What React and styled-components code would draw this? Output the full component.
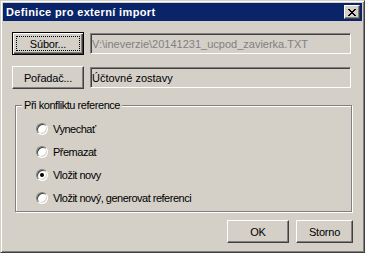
import styled, { createGlobalStyle } from "styled-components";

const GlobalStyle = createGlobalStyle`
  html,
  body {
    margin: 0;
    padding: 0;
    background: #d4d0c8;
  }

  body {
    font-family: "Liberation Sans", Arial, sans-serif;
    font-size: 11px;
    color: #000;
  }
`;

const Window = styled.div`
  width: 365px;
  height: 253px;
  box-sizing: border-box;
  display: flex;
  flex-direction: column;
  padding: 2px;
  background: #d4d0c8;
  border: 1px solid;
  border-color: #d4d0c8 #404040 #404040 #d4d0c8;
  box-shadow: inset 1px 1px #fff, inset -1px -1px #808080;
`;

const TitleBar = styled.div`
  height: 18px;
  flex: none;
  display: flex;
  align-items: center;
  padding: 0 2px 0 3px;
  background: #0a246a;
  color: #fff;
  font-weight: bold;
  font-size: 11px;
  letter-spacing: 0.35px;
`;

const CloseButton = styled.div`
  margin-left: auto;
  width: 16px;
  height: 14px;
  box-sizing: border-box;
  display: flex;
  align-items: center;
  justify-content: center;
  padding: 1px 1px 0 0;
  background: #d4d0c8;
  border: 1px solid;
  border-color: #fff #404040 #404040 #fff;
  box-shadow: inset -1px -1px #808080;

  svg {
    display: block;
  }
`;

const Body = styled.div`
  flex: 1;
  display: flex;
  flex-direction: column;
  padding: 11px 9px 0 9px;
`;

const Row = styled.div`
  display: flex;
  align-items: center;
  gap: 6px;
  height: 23px;
  margin-right: 2px;

  & + & {
    margin-top: 11px;
  }
`;

const Button = styled.div`
  position: relative;
  width: ${(p) => p.$w || 72}px;
  height: 23px;
  flex: none;
  box-sizing: border-box;
  display: flex;
  align-items: center;
  justify-content: center;
  letter-spacing: -0.2px;
  background: #d4d0c8;
  border: 1px solid;
  border-color: ${(p) =>
    p.$default ? "#000" : "#fff #404040 #404040 #fff"};
  box-shadow: ${(p) =>
    p.$default
      ? "inset 1px 1px #fff, inset -1px -1px #404040, inset -2px -2px #808080"
      : "inset -1px -1px #808080"};

  /* focus rectangle of the default button */
  &::after {
    content: "";
    display: ${(p) => (p.$default ? "block" : "none")};
    position: absolute;
    top: 3px;
    left: 3px;
    right: 3px;
    bottom: 3px;
    border: 1px dotted #000;
  }
`;

const Field = styled.div`
  flex: 1;
  height: 21px;
  box-sizing: border-box;
  display: flex;
  align-items: center;
  padding: 0 1px;
  white-space: nowrap;
  overflow: hidden;
  color: ${(p) => (p.$disabled ? "#808080" : "#000")};
  background: #d4d0c8;
  border: 1px solid;
  border-color: #808080 #fff #fff #808080;
  box-shadow: inset 1px 1px #404040, inset -1px -1px #d4d0c8;
`;

const GroupBox = styled.div`
  position: relative;
  height: 107px;
  box-sizing: border-box;
  margin: 16px 1px 0 3px;
  padding: 11px 0 2px 20px;
  border: 1px solid #808080;
  box-shadow: inset 1px 1px #fff, 1px 1px #fff;
`;

const Legend = styled.span`
  position: absolute;
  top: -7px;
  left: 6px;
  padding: 0 2px;
  line-height: 13px;
  letter-spacing: -0.45px;
  background: #d4d0c8;
`;

const Option = styled.div`
  display: flex;
  align-items: center;
  gap: 5px;
  height: 23px;
  letter-spacing: -0.5px;
`;

const Radio = styled.span`
  position: relative;
  width: 12px;
  height: 12px;
  flex: none;
  box-sizing: border-box;
  border-radius: 50%;
  background: #fff;
  border: 1px solid;
  border-color: #808080 #fff #fff #808080;
  box-shadow: inset 1px 1px #404040, inset -1px -1px #d4d0c8;

  &::after {
    content: "";
    display: ${(p) => (p.$checked ? "block" : "none")};
    position: absolute;
    top: 3px;
    left: 3px;
    width: 4px;
    height: 4px;
    border-radius: 50%;
    background: #000;
  }
`;

const Footer = styled.div`
  display: flex;
  justify-content: flex-end;
  gap: 7px;
  margin-top: 8px;
`;

const options = [
  { label: "Vynechať" },
  { label: "Přemazat" },
  { label: "Vložit novy", checked: true },
  { label: "Vložit nový, generovat referenci" },
];

const App = () => {
  return (
    <>
      <GlobalStyle />
      <Window>
        <TitleBar>
          Definice pro externí import
          <CloseButton>
            <svg width="8" height="7" viewBox="0 0 8 7" shapeRendering="crispEdges">
              <path
                fill="#000"
                d="M0 0h2v1H0zM6 0h2v1H6zM1 1h2v1H1zM5 1h2v1H5zM2 2h4v1H2zM3 3h2v1H3zM2 4h4v1H2zM1 5h2v1H1zM5 5h2v1H5zM0 6h2v1H0zM6 6h2v1H6z"
              />
            </svg>
          </CloseButton>
        </TitleBar>
        <Body>
          <Row>
            <Button $default>Súbor...</Button>
            <Field $disabled>V:\ineverzie\20141231_ucpod_zavierka.TXT</Field>
          </Row>
          <Row>
            <Button>Pořadač...</Button>
            <Field>Účtovné zostavy</Field>
          </Row>
          <GroupBox>
            <Legend>Při konfliktu reference</Legend>
            {options.map((o) => (
              <Option key={o.label}>
                <Radio $checked={o.checked} />
                {o.label}
              </Option>
            ))}
          </GroupBox>
          <Footer>
            <Button $w={62}>OK</Button>
            <Button $w={57}>Storno</Button>
          </Footer>
        </Body>
      </Window>
    </>
  );
};

export default App;
